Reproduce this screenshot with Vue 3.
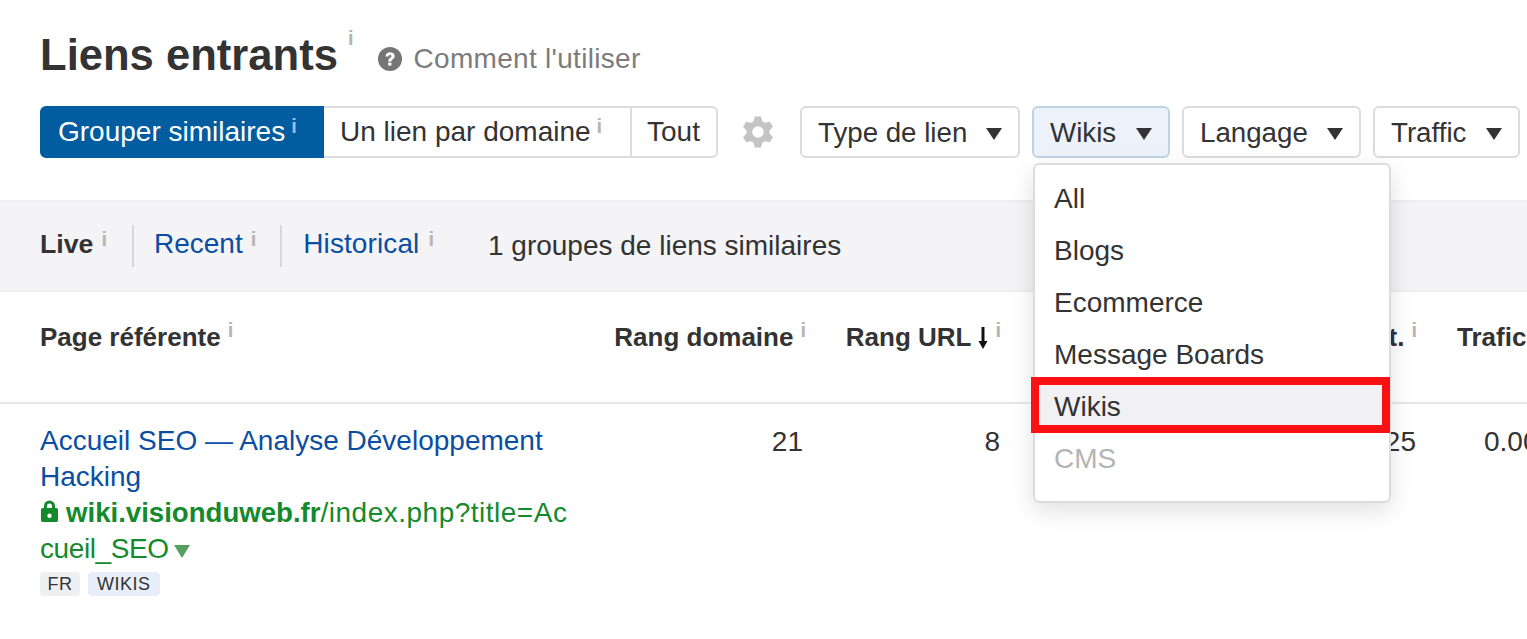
<script setup>
const menu = ['All', 'Blogs', 'Ecommerce', 'Message Boards', 'Wikis', 'CMS']
const filters = [
  { label: 'Type de lien', w: 220 },
  { label: 'Wikis', w: 138, active: true },
  { label: 'Langage', w: 179 },
  { label: 'Traffic', w: 147 }
]

const polar = (r, deg) => {
  const a = (deg * Math.PI) / 180
  return `${(16 + r * Math.cos(a)).toFixed(2)} ${(16 + r * Math.sin(a)).toFixed(2)}`
}
const gearPath = (() => {
  let d = ''
  for (let i = 0; i < 6; i++) {
    const c = -90 + i * 60
    d += `${i ? 'L' : 'M'}${polar(11.5, c - 24)}L${polar(15.8, c - 11)}L${polar(15.8, c + 11)}L${polar(11.5, c + 24)}`
  }
  return `${d}Z M16 10.200a5.800 5.800 0 1 0 0 11.600a5.800 5.800 0 0 0 0-11.600Z`
})()
</script>

<template>
  <div class="page">
    <header class="title-row">
      <h1 class="title">Liens entrants</h1><sup class="info title-i">i</sup>
      <a class="help">
        <svg class="help-icon" viewBox="0 0 24 24" width="24" height="24">
          <circle cx="12" cy="12" r="12" fill="#757575" />
          <path d="M7.500 9.400c.2-2.700 2-4.200 4.600-4.200 2.700 0 4.600 1.500 4.600 3.800 0 1.700-.9 2.600-2.100 3.400-1 .6-1.300 1-1.300 2.200H10.200c0-1.900.5-2.900 1.800-3.700.9-.6 1.400-1 1.400-1.700 0-.7-.6-1.200-1.400-1.200-.9 0-1.400.6-1.500 1.500z" fill="#fff" />
          <rect x="10.200" y="15.600" width="3.200" height="3" fill="#fff" />
        </svg>
        Comment l'utiliser
      </a>
    </header>

    <div class="toolbar">
      <div class="segmented">
        <div class="seg seg-on">Grouper similaires<sup class="info light">i</sup></div>
        <div class="seg seg-mid">Un lien par domaine<sup class="info">i</sup></div>
        <div class="seg seg-last">Tout</div>
      </div>
      <svg class="gear" viewBox="0 0 32 32" width="32" height="32">
        <path fill="#c4c4c4" fill-rule="evenodd" :d="gearPath" />
      </svg>
      <div class="filters">
        <div
          v-for="f in filters"
          :key="f.label"
          class="filter"
          :class="{ 'filter-on': f.active }"
          :style="{ width: f.w + 'px' }"
        >
          <span>{{ f.label }}</span>
          <i class="caret"></i>
        </div>
      </div>
    </div>

    <div class="summary">
      <span class="tab tab-first"><b>Live</b><sup class="info">i</sup></span>
      <span class="tab tab-mid"><a class="link">Recent</a><sup class="info">i</sup></span>
      <span class="tab tab-last"><a class="link">Historical</a><sup class="info">i</sup></span>
      <span class="count">1 groupes de liens similaires</span>
    </div>

    <div class="thead">
      <div class="th c-page">Page référente<sup class="info">i</sup></div>
      <div class="th c-dr">Rang domaine<sup class="info">i</sup></div>
      <div class="th c-ur">Rang URL<svg class="arrow" viewBox="0 0 10 22" width="10" height="22"><path d="M5 0v16" stroke="#111" stroke-width="3" /><path d="M.5 14 5 22 9.500 14z" fill="#111" /></svg><sup class="info">i</sup></div>
      <div class="th c-ext">Ext.<sup class="info">i</sup></div>
      <div class="th c-traffic">Trafic</div>
    </div>

    <div class="trow">
      <div class="c-page">
        <a class="link row-title">Accueil SEO — Analyse Développement Hacking</a>
        <div class="url">
          <svg class="lock" viewBox="0 0 17 22" width="17" height="22">
            <path fill="#148a2c" fill-rule="evenodd" d="M3 8V6a5.500 5.500 0 0 1 11 0v2h1.200c1 0 1.800.8 1.800 1.800v10.400c0 1-.8 1.800-1.800 1.800H1.800C.8 22 0 21.200 0 20.200V9.800C0 8.800.8 8 1.800 8zm3 0h5V6a2.500 2.500 0 0 0-5 0zm2.500 5.500a2.200 2.200 0 1 0 0 4.400 2.200 2.200 0 0 0 0-4.400z" />
          </svg>
          <b>wiki.visionduweb.fr</b><span class="url-path">/index.php?title=Ac</span><br /><span class="url-tail">cueil_SEO</span><i class="url-caret"></i>
        </div>
        <div class="tags">
          <span class="tag tag-grey">FR</span>
          <span class="tag tag-blue">WIKIS</span>
        </div>
      </div>
      <div class="td c-dr">21</div>
      <div class="td c-ur">8</div>
      <div class="td c-ext">25</div>
      <div class="td c-traffic">0.00</div>
    </div>

    <div class="menu">
      <div
        v-for="m in menu"
        :key="m"
        class="menu-item"
        :class="{ 'menu-sel': m === 'Wikis', 'menu-off': m === 'CMS' }"
      >{{ m }}</div>
    </div>
  </div>
</template>

<style scoped>
.page {
  position: relative;
  width: 1527px;
  height: 639px;
  overflow: hidden;
  background: #fff;
  color: #333;
  font-family: "Liberation Sans", Arial, sans-serif;
  font-size: 28px;
}
.title-row {
  display: flex;
  align-items: flex-start;
  height: 106px;
  padding-left: 40px;
  box-sizing: border-box;
}
.title {
  margin: 30px 0 0;
  font-size: 43.6px;
  line-height: 50px;
  font-weight: 700;
  color: #333;
}
.info {
  font-size: 20px;
  font-weight: 700;
  line-height: 1;
  color: #b4b4b4;
  margin-left: 6px;
  vertical-align: 11px;
}
.info.light { color: #9dbcdc; }
.title-i { margin: 28px 0 0 10px; vertical-align: baseline; }
.help {
  display: flex;
  align-items: center;
  gap: 12px;
  margin: 42px 0 0 24px;
  height: 34px;
  color: #7c7c7c;
  letter-spacing: .3px;
}
.toolbar {
  display: flex;
  align-items: center;
  height: 52px;
  padding-left: 40px;
}
.segmented { display: flex; height: 52px; }
.seg {
  box-sizing: border-box;
  display: flex;
  align-items: center;
  height: 52px;
  white-space: nowrap;
  border: 2px solid #dcdcdc;
}
.seg sup { align-self: flex-start; margin-top: 8px; vertical-align: baseline; }
.seg-on {
  width: 284px;
  padding-left: 16px;
  background: #015ca0;
  border-color: #015ca0;
  border-radius: 6px 0 0 6px;
  color: #fff;
}
.seg-mid { width: 308px; padding-left: 16px; border-left: 0; }
.seg-last { width: 86px; padding-left: 15px; border-left: 0; border-radius: 0 6px 6px 0; }
.gear { margin: 0 26px 0 24px; flex: none; }
.filters { display: flex; gap: 12px; }
.filter {
  box-sizing: border-box;
  display: flex;
  align-items: center;
  justify-content: space-between;
  height: 52px;
  padding: 2px 16px 0;
  border: 2px solid #dcdcdc;
  border-radius: 6px;
  white-space: nowrap;
  flex: none;
  font-size: 27.7px;
}
.filter-on { background: #edf2fa; border-color: #bcd3ea; }
.caret {
  width: 0;
  height: 0;
  border-left: 8px solid transparent;
  border-right: 8px solid transparent;
  border-top: 12px solid #333;
  margin-top: 2px;
}
.summary {
  box-sizing: border-box;
  display: flex;
  align-items: center;
  height: 92px;
  margin-top: 42px;
  padding-left: 40px;
  background: #f4f4f6;
  border-top: 2px solid #efefef;
  border-bottom: 2px solid #efefef;
}
.tab {
  display: flex;
  align-items: flex-start;
  height: 42px;
  line-height: 38px;
  padding: 0 24px 0 20px;
  border-right: 2px solid #d8d8d8;
}
.tab b { font-size: 26.700px; }
.tab sup { line-height: 1; margin-top: 4px; margin-left: 8px; vertical-align: baseline; }
.tab-first { padding: 0 25px 0 0; }
.tab-last { border-right: 0; padding-right: 0; padding-left: 21px; }
.tab-last a { letter-spacing: .1px; }
.tab-last sup { margin-left: 9px; }
.link { color: #0a4ea3; }
.count { margin-left: 54px; }
.thead {
  box-sizing: border-box;
  position: relative;
  height: 112px;
  border-bottom: 2px solid #e9e9e9;
  display: flex;
  padding-top: 28px;
}
.th { font-weight: 700; font-size: 26px; line-height: 34px; white-space: nowrap; }
.th sup { vertical-align: 9px; margin-left: 7px; }
.arrow { vertical-align: -3px; margin-left: 7px; }
.trow { display: flex; padding-top: 19px; }
.td { line-height: 38px; white-space: nowrap; }
.c-page { width: 570px; padding-left: 40px; box-sizing: border-box; flex: none; }
.c-dr { width: 236px; text-align: right; flex: none; }
.c-ur { width: 195px; text-align: right; flex: none; }
.c-ext { width: 416px; text-align: right; flex: none; }
.c-traffic { margin-left: 40px; flex: none; }
.trow .c-dr { width: 233px; }
.trow .c-ur { width: 197px; }
.trow .c-ext { width: 416px; }
.trow .c-traffic { margin-left: 68px; }
.row-title { display: block; width: 520px; line-height: 36px; }
.url {
  width: 540px;
  line-height: 36px;
  color: #148a2c;
}
.url b { font-size: 27.6px; }
.url-path { letter-spacing: .5px; }
.url-tail { letter-spacing: -.4px; }
.lock { vertical-align: 0; margin: 0 8px 0 1px; }
.url-caret {
  display: inline-block;
  width: 0;
  height: 0;
  margin-left: 5px;
  border-left: 8px solid transparent;
  border-right: 8px solid transparent;
  border-top: 13px solid #55a05f;
}
.tags { display: flex; gap: 8px; margin-top: 5px; }
.tag {
  box-sizing: border-box;
  height: 24px;
  padding: 0 7px;
  font-size: 18px;
  line-height: 24px;
  border-radius: 4px;
  letter-spacing: .5px;
}
.tag-grey { background: #eeeff3; padding: 0 7.500px; }
.tag-blue { background: #e7eef7; padding: 0 9px; }
.menu {
  position: absolute;
  left: 1033px;
  top: 163px;
  box-sizing: border-box;
  width: 358px;
  height: 340px;
  padding-top: 8px;
  background: #fff;
  border: 2px solid #dcdcdc;
  border-radius: 6px;
  box-shadow: 0 8px 24px rgba(0, 0, 0, .12);
}
.menu-item {
  height: 52px;
  line-height: 52px;
  padding-left: 19px;
  position: relative;
}
.menu-sel { background: #f1f1f4; }
.menu-sel::after {
  content: "";
  position: absolute;
  left: -4px;
  right: -1px;
  top: -4px;
  bottom: 0;
  border: 8px solid #fb1014;
}
.menu-off { color: #b4b4b4; }
</style>
